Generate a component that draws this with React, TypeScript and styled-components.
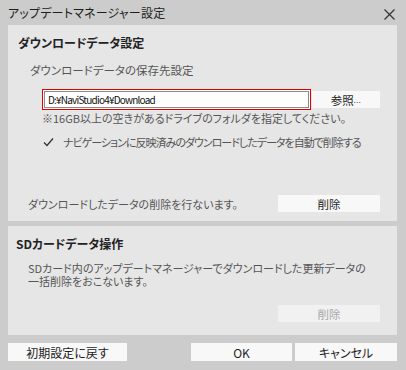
import React from 'react';
import styled, { createGlobalStyle } from 'styled-components';

const GlobalStyle = createGlobalStyle`
  html, body {
    margin: 0;
    padding: 0;
    background: #cccccc;
  }
  * {
    box-sizing: border-box;
  }
`;

const FONT = `"Noto Sans CJK JP", "Noto Sans", sans-serif`;

const Window = styled.div`
  width: 406px;
  height: 370px;
  background: #cccccc;
  display: flex;
  flex-direction: column;
  font-family: ${FONT};
  font-feature-settings: 'palt';
  color: #1e1e1e;
  overflow: hidden;
`;

const TitleBar = styled.div`
  height: 25px;
  display: flex;
  align-items: center;
  justify-content: space-between;
  padding: 0 11px 0 8px;
  font-size: 12px;
  letter-spacing: 0.2px;
`;

const CloseButton = styled.div`
  width: 11px;
  height: 11px;
  display: flex;
  margin-top: 3px;
`;

const Body = styled.div`
  display: flex;
  flex-direction: column;
  gap: 5px;
  padding: 0 9px 0 8px;
`;

const Panel = styled.section<{ $height: number }>`
  height: ${(p) => p.$height}px;
  background: #e6e6e6;
  display: flex;
  flex-direction: column;
`;

const PanelTitle = styled.h2<{ $indent: number }>`
  margin: 0;
  height: 34px;
  display: flex;
  align-items: center;
  padding-left: ${(p) => p.$indent}px;
  font-size: 12px;
  font-weight: 700;
  color: #222;
`;

const SubTitle = styled.div`
  margin: 3px 0 0 22px;
  font-size: 11.5px;
  color: #555;
  height: 16px;
  display: flex;
  align-items: center;
`;

const PathRow = styled.div`
  margin: 11px 0 0 34px;
  display: flex;
  align-items: center;
`;

const PathFrame = styled.div`
  width: 269px;
  height: 21px;
  border: 1px solid #e00000;
  padding: 1px;
  background: #ffffff;
`;

const PathInput = styled.div`
  height: 100%;
  border: 1px solid #8c8c8c;
  padding-left: 3px;
  display: flex;
  align-items: center;
  font-size: 10px;
  letter-spacing: -0.8px;
  color: #111;
`;

const Button = styled.div<{ $width: number; $disabled?: boolean }>`
  width: ${(p) => p.$width}px;
  height: 17px;
  background: ${(p) => (p.$disabled ? '#f1f1f1' : '#f8f8f8')};
  color: ${(p) => (p.$disabled ? '#a8a8a8' : '#1e1e1e')};
  display: flex;
  align-items: center;
  justify-content: center;
  font-size: 11.5px;
`;

const BrowseButton = styled(Button)`
  margin-left: 1px;
`;

const Dots = styled.span`
  font-size: 7px;
  letter-spacing: 0.5px;
  align-self: flex-end;
  margin-bottom: 3px;
`;

const Note = styled.div`
  margin: 0 0 0 34px;
  font-size: 11px;
  color: #555;
  height: 16px;
  display: flex;
  align-items: center;
`;

const CheckRow = styled.div`
  margin: 8px 0 0 35px;
  display: flex;
  align-items: center;
  gap: 9px;
  font-size: 11px;
  letter-spacing: -1px;
  color: #555;
  height: 16px;
`;

const CheckBox = styled.div`
  width: 11px;
  height: 11px;
  display: flex;
`;

const ActionRow = styled.div<{ $bottom: number }>`
  margin-top: auto;
  margin-bottom: ${(p) => p.$bottom}px;
  padding: 0 17px 0 20px;
  display: flex;
  align-items: center;
  justify-content: space-between;
  font-size: 11px;
  color: #555;
`;

const Description = styled.p`
  margin: 2px 0 0 20px;
  font-size: 11px;
  line-height: 13px;
  color: #555;
`;

const Footer = styled.div`
  display: flex;
  align-items: center;
  margin-top: 8px;
  padding: 0 9px 0 8px;
`;

const FooterButton = styled(Button)`
  height: 18px;
  font-size: 12px;
`;

const Spacer = styled.div`
  flex: 1;
`;

const ButtonPair = styled.div`
  display: flex;
  gap: 3px;
`;

export default function App() {
  return (
    <>
      <GlobalStyle />
      <Window>
        <TitleBar>
          <span>アップデートマネージャー設定</span>
          <CloseButton>
            <svg width="11" height="11" viewBox="0 0 11 11">
              <path d="M0.5 0.5 L10.5 10.5 M10.5 0.5 L0.5 10.5" stroke="#333" strokeWidth="1.2" />
            </svg>
          </CloseButton>
        </TitleBar>
        <Body>
          <Panel $height={196}>
            <PanelTitle $indent={10}>ダウンロードデータ設定</PanelTitle>
            <SubTitle>ダウンロードデータの保存先設定</SubTitle>
            <PathRow>
              <PathFrame>
                <PathInput>D:¥NaviStudio4¥Download</PathInput>
              </PathFrame>
              <BrowseButton $width={68}>
                参照<Dots>...</Dots>
              </BrowseButton>
            </PathRow>
            <Note>※16GB以上の空きがあるドライブのフォルダを指定してください。</Note>
            <CheckRow>
              <CheckBox>
                <svg width="11" height="11" viewBox="0 0 11 11">
                  <path d="M1 5.5 L4 8.5 L10 1.5" stroke="#333" strokeWidth="1.3" fill="none" />
                </svg>
              </CheckBox>
              <span>ナビゲーションに反映済みのダウンロードしたデータを自動で削除する</span>
            </CheckRow>
            <ActionRow $bottom={9}>
              <span>ダウンロードしたデータの削除を行ないます。</span>
              <Button $width={102}>削除</Button>
            </ActionRow>
          </Panel>
          <Panel $height={109}>
            <PanelTitle $indent={8}>SDカードデータ操作</PanelTitle>
            <Description>
              SDカード内のアップデートマネージャーでダウンロードした更新データの
              <br />
              一括削除をおこないます。
            </Description>
            <ActionRow $bottom={13}>
              <span />
              <Button $width={102} $disabled>
                削除
              </Button>
            </ActionRow>
          </Panel>
        </Body>
        <Footer>
          <FooterButton $width={119}>初期設定に戻す</FooterButton>
          <Spacer />
          <ButtonPair>
            <FooterButton $width={101}>OK</FooterButton>
            <FooterButton $width={102}>キャンセル</FooterButton>
          </ButtonPair>
        </Footer>
      </Window>
    </>
  );
}
